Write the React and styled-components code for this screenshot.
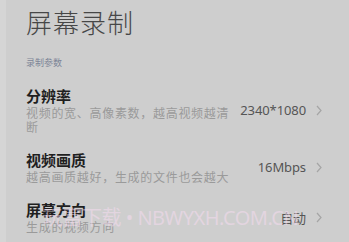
import React from "react";
import styled, { createGlobalStyle } from "styled-components";

const Global = createGlobalStyle`
  html, body { margin: 0; padding: 0; background: #cecece; }
  body { font-family: "Noto Sans CJK SC", "Noto Sans", sans-serif; overflow: hidden; }
`;

const Page = styled.div`
  position: relative;
  width: 349px;
  height: 242px;
  background: #cecece;
  overflow: hidden;
  display: flex;
`;

const Edge = styled.div`
  width: 6px;
  flex: none;
  background: #d5d5d5;
`;

const Content = styled.div`
  flex: 1;
  min-width: 0;
  padding: 0 0 0 20px;
  display: flex;
  flex-direction: column;
`;

const Title = styled.h1`
  margin: 2px 0 0 0;
  font-size: 26px;
  line-height: 40px;
  font-weight: 300;
  color: #474747;
  letter-spacing: 1px;
`;

const Section = styled.div`
  margin-top: 14px;
  font-size: 9px;
  line-height: 14px;
  color: #7d8597;
`;

const Row = styled.div`
  display: flex;
  align-items: center;
  padding-right: 27px;
  margin-top: 16px;
`;

const Texts = styled.div`
  flex: 1;
  min-width: 0;
`;

const RowTitle = styled.div`
  font-size: 15px;
  line-height: 20px;
  font-weight: 700;
  color: #1f1f1f;
`;

const Sub = styled.div`
  font-size: 12px;
  line-height: 14px;
  color: #9a9a9a;
  width: 206px;
  letter-spacing: 0.7px;
  white-space: ${(p) => (p.$wrap ? "normal" : "nowrap")};
`;

const Value = styled.div`
  font-family: "Noto Sans", "Noto Sans CJK SC", sans-serif;
  font-size: 13px;
  color: #555555;
  margin-left: 6px;
  white-space: nowrap;
  letter-spacing: -0.1px;
`;

const Chevron = styled.svg`
  width: 6px;
  height: 11px;
  margin-left: 10px;
  flex: none;
`;

const Watermark = styled.div`
  position: absolute;
  left: 43px;
  top: 202px;
  font-family: "Noto Sans", "Noto Sans CJK SC", sans-serif;
  font-size: 20px;
  letter-spacing: -0.5px;
  color: rgba(248, 220, 242, 0.5);
  white-space: nowrap;
  pointer-events: none;
`;

const Arrow = () => (
  <Chevron viewBox="0 0 6 11">
    <path d="M1 1l4 4.5L1 10" fill="none" stroke="#a5a5a5" strokeWidth="1.2" />
  </Chevron>
);

const rows = [
  { title: "分辨率", sub: "视频的宽、高像素数，越高视频越清断", value: "2340*1080", wrap: true },
  { title: "视频画质", sub: "越高画质越好，生成的文件也会越大", value: "16Mbps" },
  { title: "屏幕方向", sub: "生成的视频方向", value: "自动" },
];

export default function App() {
  return (
    <Page>
      <Global />
      <Edge />
      <Content>
        <Title>屏幕录制</Title>
        <Section>录制参数</Section>
        {rows.map((r) => (
          <Row key={r.title}>
            <Texts>
              <RowTitle>{r.title}</RowTitle>
              <Sub $wrap={r.wrap}>{r.sub}</Sub>
            </Texts>
            <Value>{r.value}</Value>
            <Arrow />
          </Row>
        ))}
      </Content>
      <Watermark>玩富下载 • NBWYXH.COM.CN</Watermark>
    </Page>
  );
}
